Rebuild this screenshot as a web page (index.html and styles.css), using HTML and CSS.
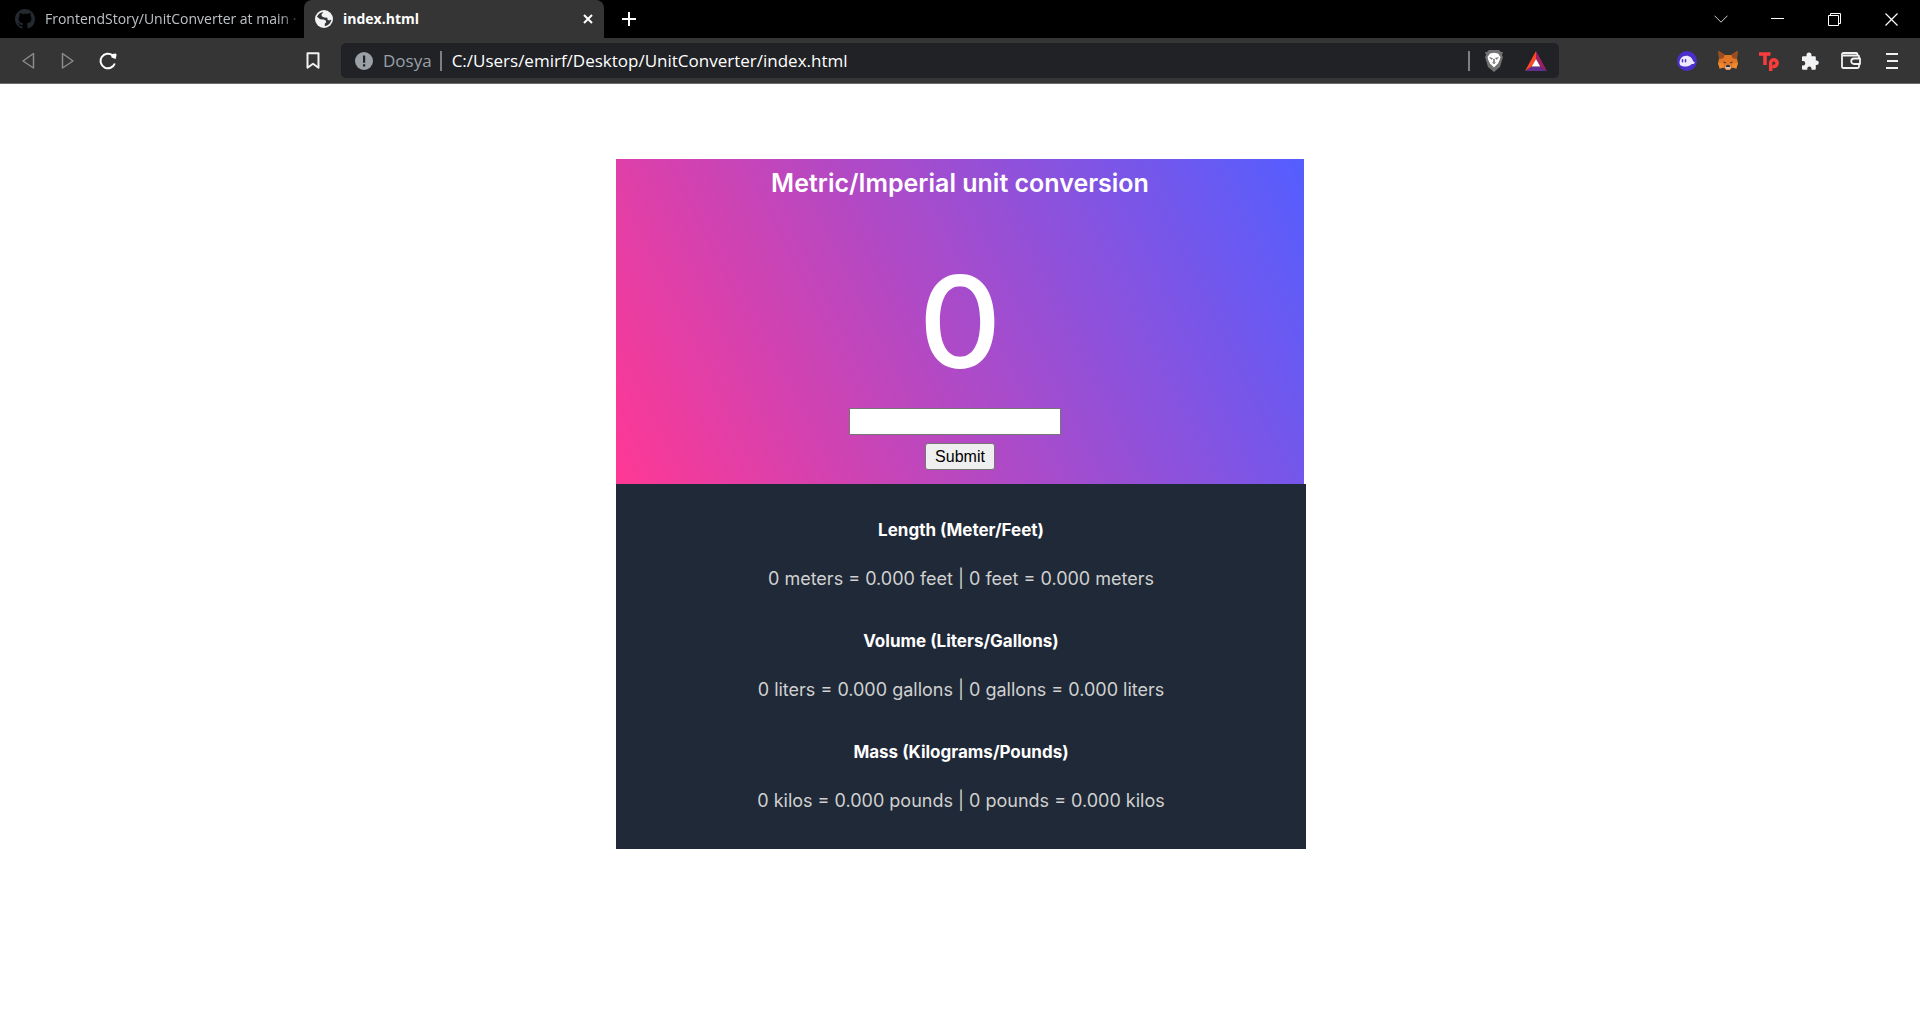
FILE: index.html
```html
<!DOCTYPE html>
<html lang="en">
<head>
<meta charset="utf-8">
<meta name="viewport" content="width=device-width, initial-scale=1">
<title>index.html</title>
<link rel="stylesheet" href="styles.css">
</head>
<body>
<header class="browser">
  <div class="tabstrip">
    <a class="tab" href="#">
      <svg class="icon" width="20" height="20" viewBox="0 0 16 16" fill="#24292f"><path d="M8 0C3.58 0 0 3.58 0 8c0 3.54 2.29 6.53 5.47 7.59.4.07.55-.17.55-.38 0-.19-.01-.82-.01-1.49-2.01.37-2.53-.49-2.69-.94-.09-.23-.48-.94-.82-1.13-.28-.15-.68-.52-.01-.53.63-.01 1.08.58 1.23.82.72 1.21 1.87.87 2.33.66.07-.52.28-.87.51-1.07-1.78-.2-3.64-.89-3.64-3.95 0-.87.31-1.59.82-2.15-.08-.2-.36-1.02.08-2.12 0 0 .67-.21 2.2.82.64-.18 1.32-.27 2-.27s1.36.09 2 .27c1.53-1.04 2.2-.82 2.2-.82.44 1.1.16 1.92.08 2.12.51.56.82 1.27.82 2.15 0 3.07-1.87 3.75-3.65 3.95.29.25.54.73.54 1.48 0 1.07-.01 1.93-.01 2.2 0 .21.15.46.55.38A8.01 8.01 0 0 0 16 8c0-4.42-3.58-8-8-8z"/></svg>
      <span class="tab-title tab-title-fade">FrontendStory/UnitConverter at main ·</span>
    </a>
    <div class="tab tab-active">
      <svg class="icon" width="18" height="18" viewBox="0 0 18 18"><circle cx="9" cy="9" r="9" fill="#f1f3f4"/><path d="M8.500 2.200 6.500 4.200 6.800 6.200 9.300 7.600 12.300 7.800 12.600 9.800 14.200 10.600 16.200 9.600C16 13 13.200 15.800 9.800 16.200L9.800 13.800 11.200 12.200 10.800 10.600 8.600 9.600 5.200 9.200 2 6.800C3 4.200 5.500 2.200 8.500 2.200Z" fill="#353535"/><path d="M2 8.500 6 11 7.500 13.500V16C4 15.200 2 12 2 8.500Z" fill="#f1f3f4"/></svg>
      <span class="tab-title">index.html</span>
      <button class="icon-button tab-close" aria-label="Close tab"><svg width="10" height="10" viewBox="0 0 10 10" stroke="#fff" stroke-width="2"><path d="M1 1l8 8M9 1L1 9"/></svg></button>
    </div>
    <button class="icon-button new-tab" aria-label="New tab"><svg width="16" height="16" viewBox="0 0 16 16" stroke="#fff" stroke-width="2"><path d="M8 1v14M1 8h14"/></svg></button>
    <div class="window-controls">
      <button class="icon-button" aria-label="Search tabs"><svg width="14" height="8" viewBox="0 0 14 8" fill="none" stroke="#d0d0d0"><path d="M.5.700l6.500 6.500L13.500.700"/></svg></button>
      <button class="icon-button" aria-label="Minimize"><svg width="13" height="2" viewBox="0 0 13 2"><path fill="#fff" d="M0 0h13v1H0z"/></svg></button>
      <button class="icon-button" aria-label="Restore"><svg width="13" height="13" viewBox="0 0 13 13" fill="none" stroke="#fff"><path d="M.5 2.500h10v10H.5zM2.500 2.500v-2h10v10h-2"/></svg></button>
      <button class="icon-button" aria-label="Close"><svg width="13" height="13" viewBox="0 0 13 13" stroke="#fff" stroke-width="1.200"><path d="M.5.500l12 12M12.500.500l-12 12"/></svg></button>
    </div>
  </div>
  <div class="toolbar">
    <nav class="toolbar-left">
      <button class="icon-button" aria-label="Back"><svg width="14" height="18" viewBox="0 0 14 18" fill="none" stroke="#8b8b8b" stroke-width="1.500" stroke-linejoin="round"><path d="M12.500 1.500v14.500L2 9Z"/></svg></button>
      <button class="icon-button" aria-label="Forward"><svg width="14" height="18" viewBox="0 0 14 18" fill="none" stroke="#8b8b8b" stroke-width="1.500" stroke-linejoin="round"><path d="M1.500 1.500v14.500L12 9Z"/></svg></button>
      <button class="icon-button" aria-label="Reload"><svg width="18" height="18" viewBox="0 0 18 18" fill="none" stroke="#fff" stroke-width="2"><path d="M15.800 11.500A7.300 7.300 0 1 1 13.500 3.300"/><path d="M12 2.200l4.500-.7q1.200 0 1 1.500l-.8 4-4.200-1.500Z" fill="#fff" stroke="none"/></svg></button>
      <button class="icon-button bookmark" aria-label="Bookmark"><svg width="14" height="17" viewBox="0 0 14 17" fill="none" stroke="#f1f1f1" stroke-width="2" stroke-linejoin="round"><path d="M1.500 1.200h11v14.500L7 11.800l-5.500 3.900Z"/></svg></button>
    </nav>
    <div class="address">
      <svg class="icon" width="18" height="18" viewBox="0 0 18 18"><circle cx="9" cy="9" r="9" fill="#9aa0a6"/><path d="M8 3.500h2.200v7.200H8zM8 12.200h2.200v2.200H8z" fill="#202124"/></svg>
      <label class="scheme" for="url">Dosya</label>
      <span class="rule"></span>
      <input class="url" id="url" type="text" value="C:/Users/emirf/Desktop/UnitConverter/index.html">
      <span class="rule"></span>
      <button class="icon-button shield" aria-label="Shields"><svg width="20" height="22" viewBox="0 0 20 22"><path d="M5 0h10l2 2h2l-1 3 1 2-3 10-6 5-6-5L1 7l1-2-1-3h2Z" fill="#717171"/><path d="M6 3.500l4-.8 4 .8 2.500 3.500-.8 3-1.700 3.500-4 4-4-4L4.300 10l-.8-3Z" fill="#fff"/><path d="M5.500 7.500l3 .7-.8 1.300ZM14.500 7.500l-3 .7.800 1.300ZM8.500 12.500h3L10 14ZM9.500 9h1v3h-1Z" fill="#717171" stroke="#717171" stroke-width=".5"/></svg></button>
      <button class="icon-button rewards" aria-label="Rewards"><svg width="22" height="20" viewBox="0 0 22 20"><path d="M11 0L0 20l7-4.500 4-7.500Z" fill="#ff4724"/><path d="M11 0l11 20-7-4.500L11 8Z" fill="#9e1f63"/><path d="M0 20h22l-7-4.500H7Z" fill="#662d91"/><path d="M11 8l4.200 7.500H6.800Z" fill="#fff"/></svg></button>
    </div>
    <nav class="extensions">
      <button class="icon-button" aria-label="Phantom"><svg width="20" height="20" viewBox="0 0 20 20"><circle cx="10" cy="10" r="10" fill="#4c2fcb"/><path d="M2.500 12C2.500 7.500 5.500 4.700 9.300 4.700c3.700 0 6 2.500 6.700 5.300.3 1 2.200.8 1.800 1.800-.6 1.300-2.300 1.400-3.300 1.400-1.500 1.800-4 2.300-6.500 2.300-3 0-5.500-1-5.500-3.500Z" fill="#edeafe"/><path d="M5.500 8.800v2M8.500 8.800v2" stroke="#4c2fcb" stroke-width="1.500" stroke-linecap="round"/></svg></button>
      <button class="icon-button" aria-label="MetaMask"><svg width="20" height="19" viewBox="0 0 20 19"><path d="M.5 0L7 4h6l6.500-4-.5 8 1 4-1.700 5.500-4.300-1-2 2.500H8l-2-2.500-4.300 1L0 12l1-4Z" fill="#e27625"/><path d="M.5 0L7 4 5 7.500 1 8ZM19.500 0L13 4l2 3.500 4 .5Z" fill="#994d21"/><path d="M0 12l5 .5 1 4-4.300 1ZM20 12l-5 .5-1 4 4.300 1Z" fill="#f08a2d"/><path d="M5 10.500l3 .8-1 1.200ZM15 10.500l-3 .8 1 1.200Z" fill="#233447"/><path d="M8 14h4l1 2.500-1.500 2h-3L7 16.500Z" fill="#d5bfb2"/><path d="M8.500 14h3l.7 2H7.800Z" fill="#233447"/></svg></button>
      <button class="icon-button" aria-label="TP"><svg width="20" height="20" viewBox="0 0 20 20" fill="none" stroke="#fa3c3c" stroke-width="3.500"><path d="M0 3h11.500M6 3v11"/><path d="M11.700 20V11a3.300 3.300 0 1 1 2 4.200"/></svg></button>
      <button class="icon-button" aria-label="Extensions"><svg width="18" height="18" viewBox="0 0 18 18" fill="#f1f3f4"><path d="M2 4.200h3.500V3a2.500 2.500 0 0 1 5 0v1.200h3.300q1 0 1 1V8.500h.7a2.300 2.300 0 0 1 0 4.600h-.7v3.700q0 1-1 1h-3.300v-1.200a2.100 2.100 0 0 0-4.200 0v1.200H2q-1 0-1-1v-3.300h1.100a2.200 2.200 0 0 0 0-4.400H1V5.200q0-1 1-1Z"/></svg></button>
      <button class="icon-button" aria-label="Wallet"><svg width="20" height="17" viewBox="0 0 20 17" fill="none" stroke="#f1f1f1" stroke-width="1.800" stroke-linejoin="round"><path d="M18 6V4.500q0-1-1-1H2M18 12v2.500q0 1.500-1.500 1.500h-14Q1 16 1 14.500v-12Q1 1 2.500 1H15q1.500 0 1.500 2"/><path d="M19 6.500h-6a2.700 2.700 0 0 0 0 5.500h6Z"/></svg></button>
      <button class="icon-button" aria-label="Menu"><svg width="12" height="16" viewBox="0 0 12 16" stroke="#f1f1f1" stroke-width="2"><path d="M0 1h12M1 8h11M0 15h12"/></svg></button>
    </nav>
  </div>
</header>
<main class="page">
  <form class="converter">
    <h1 class="converter-title">Metric/Imperial unit conversion</h1>
    <output class="converter-value" for="amount">0</output>
    <input class="converter-input" id="amount" type="text" aria-label="Value to convert">
    <button class="converter-submit" type="button">Submit</button>
  </form>
  <section class="results">
    <div class="result">
      <h2 class="result-title">Length (Meter/Feet)</h2>
      <p class="result-text">0 meters = 0.000 feet | 0 feet = 0.000 meters</p>
    </div>
    <div class="result">
      <h2 class="result-title">Volume (Liters/Gallons)</h2>
      <p class="result-text">0 liters = 0.000 gallons | 0 gallons = 0.000 liters</p>
    </div>
    <div class="result">
      <h2 class="result-title">Mass (Kilograms/Pounds)</h2>
      <p class="result-text">0 kilos = 0.000 pounds | 0 pounds = 0.000 kilos</p>
    </div>
  </section>
</main>
</body>
</html>
```
FILE: styles.css
```css
* { box-sizing: border-box; }

body {
  margin: 0;
  background: #fff;
  font-family: Inter, "Liberation Sans", sans-serif;
}

svg { display: block; flex: none; }

.browser {
  font-family: "Open Sans", "Noto Sans", sans-serif;
  color: #fff;
}

.icon-button {
  display: flex;
  align-items: center;
  justify-content: center;
  flex: none;
  width: 40px;
  height: 32px;
  padding: 0;
  border: 0;
  background: none;
}

.tabstrip {
  display: flex;
  align-items: center;
  height: 38px;
  background: #000;
}

.tab {
  display: flex;
  align-items: center;
  gap: 10px;
  width: 304px;
  height: 38px;
  padding: 0 0 0 15px;
  color: #bdc1c6;
  font-size: 14px;
  line-height: 20px;
  text-decoration: none;
}

.tab-active {
  width: 300px;
  padding: 0 6px 0 11px;
  border-radius: 8px 8px 0 0;
  background: #353535;
  color: #fff;
  font-weight: 700;
}

.tab-title {
  flex: 1;
  white-space: nowrap;
}

.tab-title-fade {
  mask-image: linear-gradient(to right, #000 90%, transparent);
}

.tab-close { width: 20px; }

.new-tab { width: 50px; }

.window-controls {
  display: flex;
  margin-left: auto;
}

.window-controls .icon-button { width: 57px; }

.toolbar {
  display: flex;
  align-items: center;
  height: 46px;
  border-bottom: 1px solid #6a6a6a;
  background: #353535;
}

.toolbar-left {
  display: flex;
  flex: none;
  width: 341px;
  padding: 0 8px;
}

.bookmark { margin-left: auto; }

.address {
  display: flex;
  align-items: center;
  flex: 1;
  min-width: 0;
  height: 35px;
  padding: 0 5px 0 14px;
  border-radius: 5px;
  background: #202226;
}

.scheme {
  margin: 0 8px 0 10px;
  color: #9aa0a6;
  font-size: 17px;
  line-height: 24px;
}

.rule {
  flex: none;
  width: 2px;
  height: 20px;
  background: #7c7f83;
}

.url {
  flex: 1;
  min-width: 0;
  margin-left: 10px;
  padding: 0;
  border: 0;
  outline: 0;
  background: none;
  color: #fff;
  font: 17px/24px "Open Sans", "Noto Sans", sans-serif;
}

.shield { width: 48px; }

.rewards { width: 36px; }

.extensions {
  display: flex;
  justify-content: flex-end;
  flex: none;
  width: 361px;
  padding-right: 8px;
}

.extensions .icon-button { width: 41px; }

.page {
  display: flex;
  flex-direction: column;
  width: 688px;
  max-width: 100%;
  margin: 75px auto 0;
}

.converter {
  display: flex;
  flex-direction: column;
  align-items: center;
  padding: 8px 0 14px;
  background: linear-gradient(64deg, #ff3894, #545eff);
  color: #fff;
}

.converter-title {
  margin: 0;
  font-size: 25px;
  font-weight: 600;
  line-height: 32px;
}

.converter-value {
  margin: 45px 0 8px;
  font-size: 128px;
  font-weight: 500;
  line-height: 156px;
}

.converter-input {
  width: 212px;
  height: 27px;
  margin-right: 10px;
  border: 1px solid #767676;
  background: #fff;
  font: 16px "Liberation Sans", sans-serif;
}

.converter-submit {
  height: 27px;
  margin-top: 8px;
  padding: 0 9px;
  border: 1px solid #767676;
  border-radius: 3px;
  background: #efefef;
  color: #000;
  font: 16px "Liberation Sans", sans-serif;
}

.results {
  display: flex;
  flex-direction: column;
  gap: 38px;
  margin-right: -2px;
  padding: 34px 0 36px;
  background: #1f2937;
  text-align: center;
}

.result-title {
  margin: 0 0 25px;
  color: #fff;
  font-size: 17px;
  font-weight: 700;
  line-height: 24px;
}

.result-text {
  margin: 0;
  color: #d1d1d1;
  font-size: 18px;
  line-height: 24px;
}
```
